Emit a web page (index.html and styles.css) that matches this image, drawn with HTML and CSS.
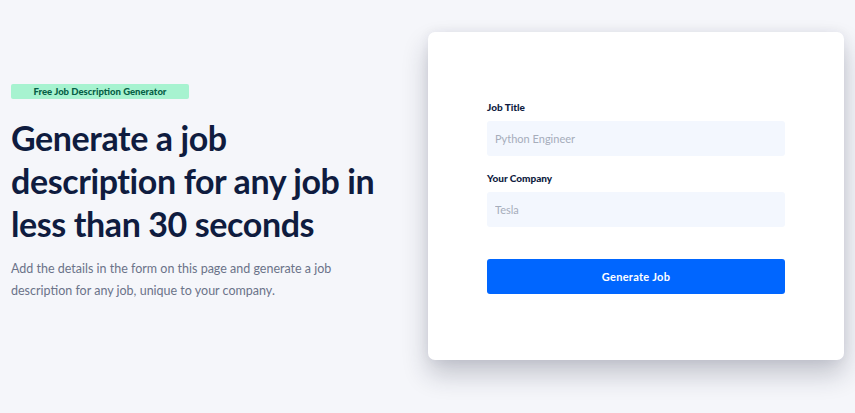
FILE: index.html
```html
<!DOCTYPE html>
<html lang="en">
<head>
<meta charset="utf-8">
<title>Free Job Description Generator</title>
<link rel="stylesheet" href="styles.css">
</head>
<body>
<main class="page">
  <section class="intro">
    <span class="badge">Free Job Description Generator</span>
    <h1 class="title">Generate a job description for any job in less than 30 seconds</h1>
    <p class="lead">Add the details in the form on this page and generate a job description for any job, unique to your company.</p>
  </section>
  <section class="card">
    <form class="form">
      <label class="label" for="title">Job Title</label>
      <input class="input" id="title" type="text" placeholder="Python Engineer">
      <label class="label label-second" for="company">Your Company</label>
      <input class="input" id="company" type="text" placeholder="Tesla">
      <button class="button" type="button">Generate Job</button>
    </form>
  </section>
</main>
</body>
</html>
```

FILE: styles.css
```css
* { box-sizing: border-box; }
html, body { margin: 0; padding: 0; }
body {
  background: #f5f6fa;
  font-family: Lato, "Open Sans", sans-serif;
  width: 855px;
  height: 413px;
  overflow: hidden;
}
.page {
  display: flex;
  align-items: center;
  padding: 32px 0 0 11px;
}
.intro {
  width: 417px;
  display: flex;
  flex-direction: column;
  align-items: flex-start;
  margin-top: -6px;
}
.badge {
  display: block;
  width: 178px;
  height: 15px;
  line-height: 15px;
  background: #a7f3d0;
  color: #065f46;
  border-radius: 2px;
  font-size: 9.5px;
  font-weight: 900;
  text-align: center;
}
.title {
  margin: 17px 0 0;
  width: 372px;
  font-family: Lato, sans-serif;
  font-size: 34px;
  line-height: 43px;
  font-weight: 700;
  color: #0f1c3f;
  letter-spacing: -0.4px;
}
.lead {
  margin: 13px 0 0;
  width: 340px;
  font-size: 12.5px;
  line-height: 22px;
  color: #6b7389;
}
.card {
  width: 416px;
  height: 328px;
  background: #ffffff;
  border-radius: 7px;
  box-shadow: 0 14px 26px rgba(30, 35, 60, 0.24), 0 0 12px rgba(30, 35, 60, 0.06);
  padding: 68px 59px 66px;
}
.form {
  display: flex;
  flex-direction: column;
}
.label {
  font-size: 10px;
  line-height: 14px;
  font-weight: 900;
  color: #0f1c3f;
  margin-bottom: 7px;
}
.label-second {
  margin-top: 15px;
  margin-bottom: 7px;
}
.input {
  width: 298px;
  height: 35px;
  border: none;
  border-radius: 3px;
  background: #f3f7fe;
  padding: 0 8px;
  font-family: inherit;
  font-size: 11px;
  color: #0f1c3f;
  outline: none;
}
.input::placeholder { color: #a6adbb; }
.button {
  margin-top: 32px;
  width: 298px;
  height: 35px;
  border: none;
  border-radius: 3px;
  background: #0066ff;
  color: #ffffff;
  font-family: inherit;
  font-size: 11px;
  font-weight: 700;
  letter-spacing: 0.3px;
}
```
